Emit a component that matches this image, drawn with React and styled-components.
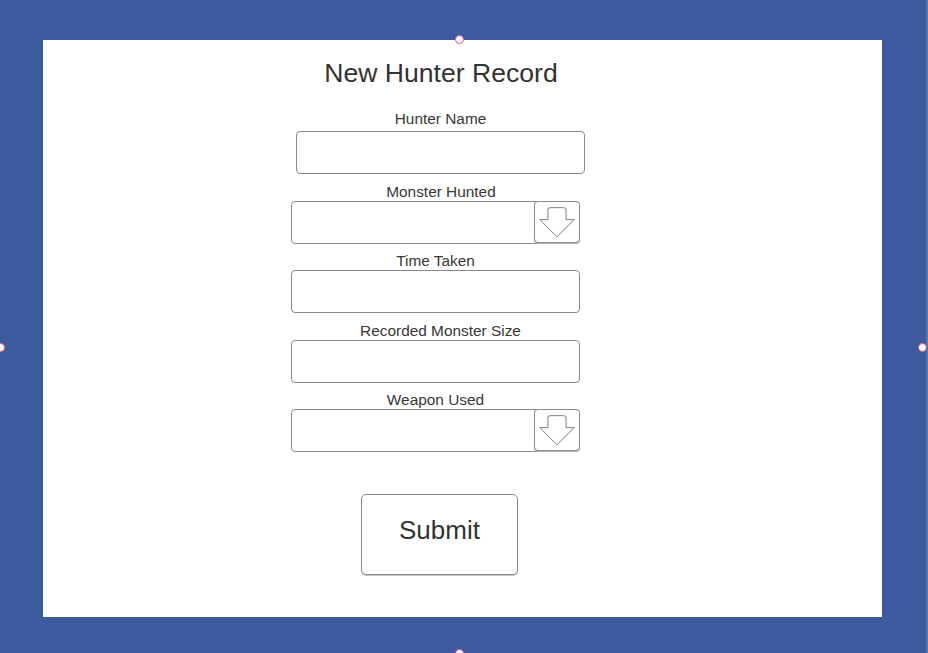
import styled, { createGlobalStyle } from 'styled-components';

const Global = createGlobalStyle`
  html, body {
    margin: 0;
    padding: 0;
    background: #3e5a9e;
    font-family: "Liberation Sans", Arial, sans-serif;
  }
`;

const Stage = styled.div`
  position: relative;
  width: 928px;
  height: 653px;
  overflow: hidden;
  padding: 40px 44px 36px 43px;
  box-sizing: border-box;
  border-right: 2px solid #5a74b0;
`;

const Panel = styled.div`
  background: #fff;
  height: 100%;
  padding: 18px 0 0 248px;
  box-sizing: border-box;
`;

const Form = styled.div`
  width: 294px;
  display: flex;
  flex-direction: column;
  gap: 6.5px;
`;

const Title = styled.h1`
  margin: 0 0 16.5px;
  font-weight: 400;
  font-size: 26.6px;
  line-height: 30px;
  color: #333;
  text-align: center;
  white-space: nowrap;
  padding-left: ${(p) => p.$shift || 0}px;
`;

const Field = styled.div`
  display: flex;
  flex-direction: column;
  padding-left: ${(p) => p.$inset || 0}px;
`;

const Label = styled.label`
  font-size: 15.4px;
  line-height: 16px;
  height: 16px;
  margin: ${(p) => (p.$drop ? '3px 0 1px' : '0 0 4px')};
  color: #383838;
  text-align: center;
  white-space: nowrap;
  width: 289px;
  padding-left: ${(p) => p.$shift || 0}px;
  box-sizing: border-box;
`;

const Box = styled.div`
  width: 289px;
  height: 43px;
  box-sizing: border-box;
  border: 1px solid #8a8a8a;
  border-radius: 4px;
  background: #fff;
  display: flex;
  justify-content: flex-end;
`;

const DropButton = styled.div`
  width: 46px;
  height: 42px;
  margin: -1px -1px 0 0;
  box-sizing: border-box;
  border: 1px solid #8a8a8a;
  border-radius: 4px;
  box-shadow: 0 1px 0 #b8b8b8;
  display: flex;
  align-items: center;
  justify-content: center;
  background: #fff;
`;

const SubmitRow = styled.div`
  margin-top: 35px;
  padding-left: 70px;
`;

const Submit = styled.button`
  width: 157px;
  height: 81px;
  border: 1px solid #8a8a8a;
  border-radius: 5px;
  box-shadow: 0 1px 0 #c4c4c4;
  background: #fff;
  font-family: "Liberation Sans", Arial, sans-serif;
  font-size: 26px;
  color: #333;
  padding: 0 0 8px;
`;

const Handle = styled.span`
  position: absolute;
  width: 7px;
  height: 7px;
  border-radius: 50%;
  background: #fff;
  border: 1px solid #e05a6a;
  left: ${(p) => p.$x - 4}px;
  top: ${(p) => p.$y - 4}px;
`;

const ArrowDown = () => (
  <svg width="46" height="42" viewBox="0 0 46 42" fill="none">
    <path
      d="M13.5 8.5 Q13.5 6 16 6 H30 Q32.5 6 32.5 8.5 V18.5 H41 L23 36.5 L5 18.5 H13.5 Z"
      stroke="#7a7a7a"
      strokeWidth="1"
      fill="#fff"
      strokeLinejoin="round"
    />
  </svg>
);

const fields = [
  { label: 'Hunter Name', inset: 5, shift: 0, select: false, drop: false },
  { label: 'Monster Hunted', inset: 0, shift: 11, select: true, drop: true },
  { label: 'Time Taken', inset: 0, shift: 0, select: false, drop: true },
  { label: 'Recorded Monster Size', inset: 0, shift: 10, select: false, drop: true },
  { label: 'Weapon Used', inset: 0, shift: 0, select: true, drop: true },
];

export default function App() {
  return (
    <>
      <Global />
      <Stage>
        <Panel>
          <Form>
            <Title $shift={6}>New Hunter Record</Title>
            {fields.map((f) => (
              <Field key={f.label} $inset={f.inset}>
                <Label $shift={f.shift} $drop={f.drop}>{f.label}</Label>
                <Box>{f.select && <DropButton><ArrowDown /></DropButton>}</Box>
              </Field>
            ))}
            <SubmitRow>
              <Submit>Submit</Submit>
            </SubmitRow>
          </Form>
        </Panel>
        <Handle $x={459} $y={39} />
        <Handle $x={0} $y={347} />
        <Handle $x={922} $y={347} />
        <Handle $x={459} $y={653} />
      </Stage>
    </>
  );
}
